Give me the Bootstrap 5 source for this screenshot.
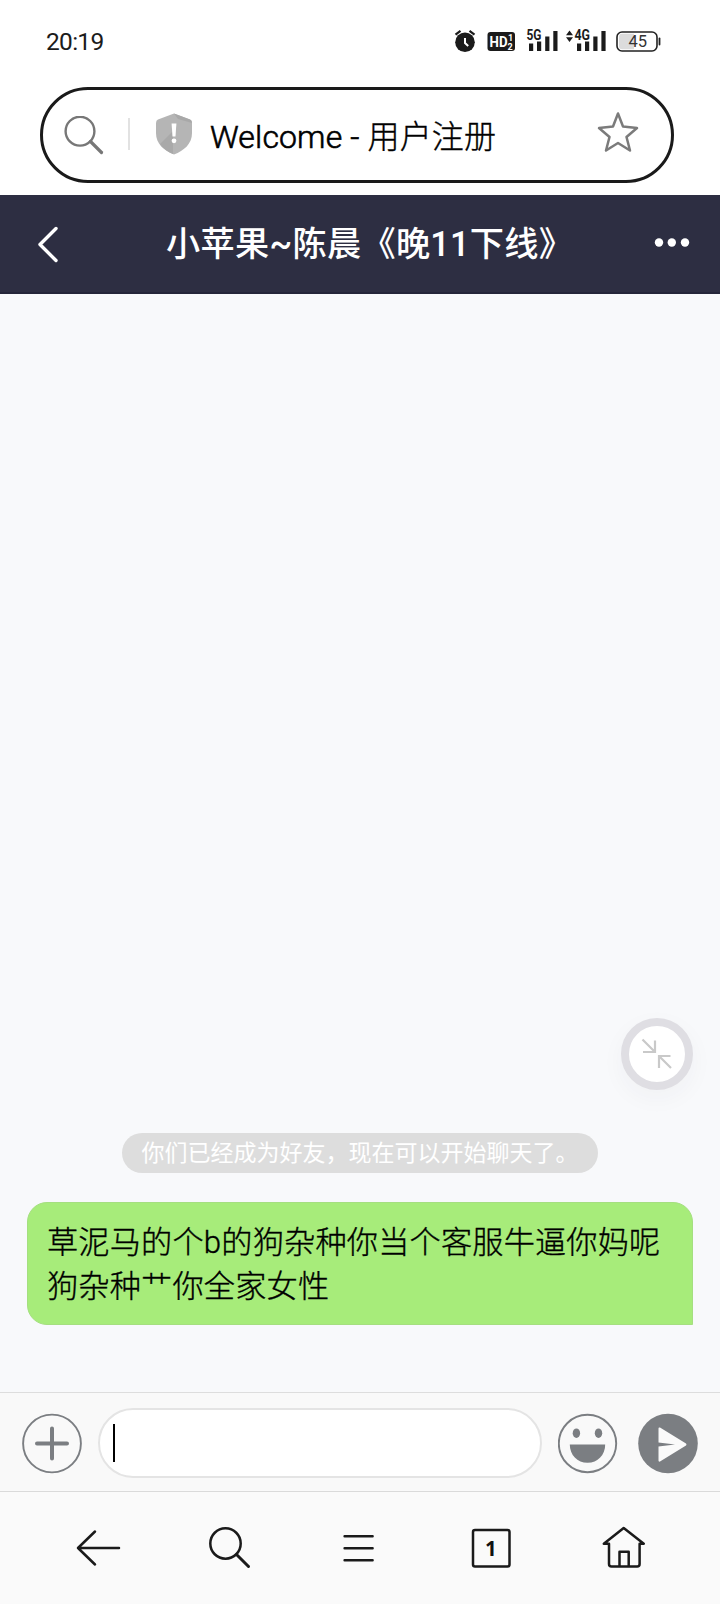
<!DOCTYPE html>
<html lang="zh-CN">
<head>
<meta charset="utf-8">
<meta name="viewport" content="width=device-width, initial-scale=1">
<title>Welcome - 用户注册</title>
<link href="https://cdn.jsdelivr.net/npm/bootstrap@5.3.0/dist/css/bootstrap.min.css" rel="stylesheet">
<style>
  body { font-family: Roboto, "Noto Sans CJK SC", sans-serif; background: #fff; color: #000; }
  svg { display: block; flex: none; }
  .phone { width: 720px; height: 1604px; }
  .status-bar { height: 87px; padding: 28px 59px 0 46px; color: #1b1b1b; }
  .clock { font-family: Roboto, sans-serif; font-size: 24.5px; line-height: 28px; letter-spacing: -.7px; }
  .address { height: 96px; margin: 0 46px 12px 40px; border: 3px solid #1a1a1a; padding: 0 32px 2px 21px; }
  .address-sep { width: 2px; height: 32px; background: #e2e2e2; margin: 0 26px 0 23px; }
  .address-title { font-size: 32px; line-height: 40px; margin-left: 18px; padding-top: 2px; font-family: Roboto, sans-serif; font-weight: 300; letter-spacing: .15px; -webkit-text-stroke: .6px #000; }
  .address-title span { font-weight: 300; font-family: "Noto Sans CJK SC", sans-serif; -webkit-text-stroke: .35px #000; }
  .chat-head { height: 99px; background: #2d2e42; color: #fff; padding: 0 30px 0 36px; border-bottom: 2px solid #25263a; }
  .chat-title { font-size: 34.2px; font-weight: 500; line-height: 44px; margin-left: 106px; white-space: nowrap; letter-spacing: .3px; }
  .chat-body { background: #f8f9fb; padding: 0 27px 67px; }
  .shrink-btn { width: 72px; height: 72px; border: 8px solid #dfdee3; background: #fff; box-shadow: 0 8px 24px rgba(60,60,80,.04); margin-bottom: 43px; }
  .notice { height: 40px; width: 476px; background: #ddd; color: #fff; font: 400 23px/37px "Noto Sans CJK SC", sans-serif; margin-bottom: 29px; white-space: nowrap; }
  .bubble { height: 123px; width: 666px; background: #a7ec7a; border: 1px solid #a5df80; border-radius: 20px 20px 0 20px; padding: 15px 0 0 19px; font: 300 31.2px/44px "Noto Sans CJK SC", sans-serif; letter-spacing: .18px; -webkit-text-stroke: .35px #000; white-space: nowrap; }
  .latin { font-family: Roboto, sans-serif; font-weight: 300; line-height: 0; }
  .composer { height: 99px; background: #f9f9f9; border-top: 1px solid #ddd; padding: 2px 21px 0 21px; }
  .entry { width: 444px; height: 70px; border: 2px solid #e4e4e4; background: #fff; border-radius: 35px; margin: 0 16px; padding-left: 13px; }
  .caret { width: 2px; height: 38px; background: #000; }
  .browser-nav { height: 113px; background: #fafafa; border-top: 1px solid #dadada; padding: 0 28px 0 32px; }
  .browser-nav a { width: 132px; }
</style>
</head>
<body>
<div class="phone d-flex flex-column overflow-hidden">
  <header class="status-bar d-flex justify-content-between">
    <div class="clock">20:19</div>
    <svg width="208" height="26" viewBox="0 0 208 26" fill="#1b1b1b" font-family="Roboto, sans-serif">
      <circle cx="12" cy="14.3" r="9.8"/>
      <path d="M2.5 6.7 7.5 2.9M16.5 2.9l5 3.8" stroke="#1b1b1b" stroke-width="2.2"/>
      <path d="M12 10v5l3.2 3" stroke="#fff" stroke-width="2" fill="none"/>
      <rect x="34.500" y="4" width="27.500" height="19" rx="3"/>
      <text x="36.600" y="19" font-size="15" font-weight="700" fill="#fff" textLength="18" lengthAdjust="spacingAndGlyphs">HD</text>
      <text x="55" y="13" font-size="9" font-weight="700" fill="#fff">1</text>
      <text x="54.600" y="21.600" font-size="9" font-weight="700" fill="#fff">2</text>
      <text x="73.500" y="12.200" font-size="14" font-weight="700" textLength="15" lengthAdjust="spacingAndGlyphs">5G</text>
      <path d="M76 15.500h4.200V23H76zM84 13.500h4.200V23H84zM92.200 8.500h4.200V23h-4.200zM100.300 3h4.200v20h-4.200z"/>
      <path d="M113 7.200 116.500 2.500 120 7.200zM113 9.300h7l-3.500 4.700z"/>
      <text x="121.500" y="12.200" font-size="14" font-weight="700" textLength="15.500" lengthAdjust="spacingAndGlyphs">4G</text>
      <path d="M124 15.500h4.200V23H124zM132 13.500h4.200V23H132zM140.300 8.500h4.200V23h-4.200zM148.400 3h4.200v20h-4.200z"/>
      <rect x="164" y="4" width="40" height="19" rx="5" fill="#fff" stroke="#222" stroke-width="1.600"/>
      <path d="M169 5.800h12v15.400h-12a3 3 0 0 1-3-3V8.800a3 3 0 0 1 3-3z" fill="#dcdcdc"/>
      <path d="M206.500 10.500v6" stroke="#222" stroke-width="1.800" stroke-linecap="round"/>
      <text x="175.500" y="19.200" font-size="16.500" textLength="18.500" fill="#333">45</text>
    </svg>
  </header>

  <div class="address rounded-pill d-flex align-items-center">
    <svg class="mt-1" width="41" height="41" viewBox="0 0 41 41" fill="none" stroke="#777"><circle cx="16" cy="15.200" r="14.400" stroke-width="2.400"/><path d="M26.500 25.500 37.500 36.500" stroke-width="3.200" stroke-linecap="round"/></svg>
    <div class="address-sep"></div>
    <svg width="36" height="42" viewBox="0 0 36 42"><path d="M18 .6 34 6.500Q36 7.300 36 10v10c0 11-8 17.500-18 21.500C8 37.500 0 31 0 20V10Q0 7.300 2 6.500z" fill="#b5b5b5"/><path d="M18 .6 34 6.500Q36 7.300 36 10L22 6z" fill="#a8a8a8"/><path d="M4 31 17 18v23C12 39 7 35.500 4 31z" fill="#a9a9a9"/><path d="M15.600 10.500h4.800l-.9 13h-3z" fill="#fff"/><circle cx="18" cy="27.800" r="2.400" fill="#fff"/></svg>
    <div class="address-title flex-grow-1">Welcome - <span>用户注册</span></div>
    <svg class="mb-1" width="42" height="42" viewBox="0 0 42 42" fill="none" stroke="#7b7b7b" stroke-width="2.500" stroke-linejoin="round"><path d="M21 2.500 26 15.500 40 17 29.500 26 33 39.500 21 32 9 39.500 12.500 26 2 17 16 15.500z"/></svg>
  </div>

  <nav class="chat-head d-flex align-items-center">
    <svg width="24" height="38" viewBox="0 0 24 38" fill="none" stroke="#fff" stroke-width="3.400" stroke-linecap="round" stroke-linejoin="round"><path d="M20 3.500 4 19.500 20 35.500"/></svg>
    <div class="chat-title flex-grow-1">小苹果~陈晨《晚11下线》</div>
    <svg width="36" height="12" viewBox="0 0 36 12" fill="#fff"><circle cx="5" cy="4.500" r="4.200"/><circle cx="17.800" cy="4.500" r="4.200"/><circle cx="31" cy="4.500" r="4.200"/></svg>
  </nav>

  <main class="chat-body flex-grow-1 d-flex flex-column justify-content-end">
    <div class="shrink-btn rounded-circle align-self-end d-flex align-items-center justify-content-center">
      <svg width="32" height="32" viewBox="0 0 32 32" fill="none" stroke="#c9c9c9" stroke-width="2.200"><path d="M1.500 1.500 13.500 13.500M2 14h12V2.500M30 30 18 18M29.500 18H18v12"/></svg>
    </div>
    <div class="notice rounded-pill align-self-center text-center">你们已经成为好友，现在可以开始聊天了。</div>
    <div class="bubble">草泥马的个<span class="latin">b</span>的狗杂种你当个客服牛逼你妈呢<br>狗杂种艹你全家女性</div>
  </main>

  <section class="composer d-flex align-items-center">
    <svg width="61" height="61" viewBox="0 0 61 61" fill="none" stroke="#7b7e82"><circle cx="31" cy="30.500" r="28.900" stroke-width="1.900"/><path d="M31 15.500v30M16 30.500h30" stroke-width="4" stroke-linecap="round"/></svg>
    <div class="entry d-flex align-items-center"><div class="caret"></div></div>
    <svg width="60" height="61" viewBox="0 0 60 61" fill="#7b7e82"><circle cx="29.500" cy="30.500" r="28.700" fill="none" stroke="#7b7e82" stroke-width="1.900"/><ellipse cx="18.400" cy="20.200" rx="3.700" ry="4.800"/><ellipse cx="40.500" cy="20.200" rx="3.700" ry="4.800"/><path d="M11.800 31.500h35.400c0 10.500-7.500 18.300-17.700 18.300S11.800 42 11.800 31.500z"/></svg>
    <svg class="ms-auto" width="61" height="61" viewBox="0 0 61 61"><circle cx="30" cy="30.500" r="29.800" fill="#7b7e82"/><path d="M22 14.500 48 30.500Q49 31.500 48 32.500L22 48.500Q20.500 49 20.500 47.500V33.500L37 31.500 20.500 29.500V15.500Q20.500 14 22 14.500z" fill="#fafafa"/></svg>
  </section>

  <nav class="browser-nav d-flex align-items-center">
    <a class="d-flex justify-content-center"><svg width="60" height="60" viewBox="0 0 60 60" fill="none" stroke="#1a1a1a" stroke-width="2.500" stroke-linecap="round" stroke-linejoin="round"><path d="M51 30H10M27 13.500 10 30 27 46.500"/></svg></a>
    <a class="d-flex justify-content-center"><svg width="60" height="60" viewBox="0 0 60 60" fill="none" stroke="#1a1a1a" stroke-linecap="round"><circle cx="25.500" cy="25.500" r="15.200" stroke-width="2.500"/><path d="M36.500 36.500 48.500 48.500" stroke-width="3"/></svg></a>
    <a class="d-flex justify-content-center"><svg width="60" height="60" viewBox="0 0 60 60" fill="none" stroke="#1a1a1a" stroke-width="2.500" stroke-linecap="round"><path d="M12.600 18.300h28M12.600 30.300h28M12.600 42.200h28"/></svg></a>
    <a class="d-flex justify-content-center"><svg width="60" height="60" viewBox="0 0 60 60"><rect x="9" y="12" width="36.500" height="36.500" rx="2" fill="none" stroke="#1a1a1a" stroke-width="2.500"/><text x="26.800" y="38" font-size="20.500" font-weight="700" font-family="Noto Sans, sans-serif" text-anchor="middle" fill="#111">1</text></svg></a>
    <a class="d-flex justify-content-center"><svg width="60" height="60" viewBox="0 0 60 60" fill="none" stroke="#1a1a1a" stroke-width="2.500" stroke-linecap="round" stroke-linejoin="round"><path d="M13 25.800H7.800L27.700 10 47.800 25.800H43.600V46q0 2.500-2.500 2.500H15.500Q13 48.500 13 46zM23.500 48V33.800h9.200V48"/></svg></a>
  </nav>
</div>
<script src="https://cdn.jsdelivr.net/npm/bootstrap@5.3.0/dist/js/bootstrap.bundle.min.js"></script>
</body>
</html>
